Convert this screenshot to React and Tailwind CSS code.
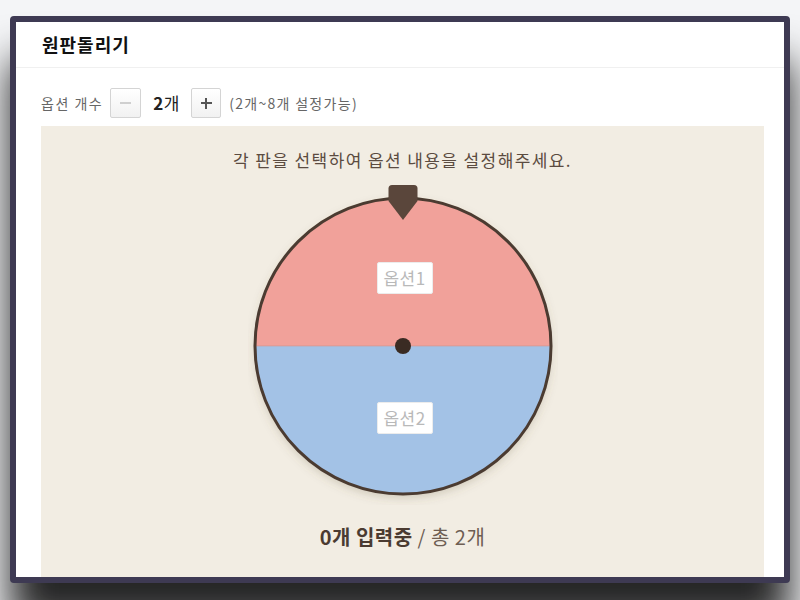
import React, { useState } from "react";

const font = { fontFamily: '"Noto Sans CJK KR", "Noto Sans", sans-serif' };

function Wheel({ labels }) {
  return (
    <div className="relative w-[310px] h-[320px]">
      <svg width="310" height="320" viewBox="0 0 310 320" className="absolute left-0 top-0">
        <defs>
          <filter id="sh" x="-20%" y="-20%" width="140%" height="140%">
            <feDropShadow dx="0" dy="4" stdDeviation="5" floodColor="#6b5a40" floodOpacity="0.25" />
          </filter>
          <clipPath id="disc">
            <circle cx="155" cy="161" r="148" />
          </clipPath>
        </defs>
        <circle cx="155" cy="161" r="148" fill="#a3c2e6" filter="url(#sh)" />
        <g clipPath="url(#disc)">
          <rect x="0" y="0" width="310" height="161" fill="#f1a19a" />
          <rect x="0" y="160" width="310" height="1.5" fill="#d99a94" opacity="0.6" />
        </g>
        <circle cx="155" cy="161" r="148" fill="none" stroke="#4b3b31" strokeWidth="3" />
        <circle cx="155" cy="161" r="8" fill="#3a2b23" />
        <path d="M144 0 H166 Q169.5 0 169.5 3.5 V16 L155 35 L140.5 16 V3.5 Q140.5 0 144 0 Z" fill="#5a463b" />
      </svg>
      {labels.map((l, i) => (
        <div
          key={l}
          className={`absolute left-[129px] w-[56px] h-[32px] bg-white rounded-[2px] border border-[#ececec] flex items-center justify-center text-[17px] tracking-[0.5px] text-[#b9b9b9] ${i === 0 ? "top-[77px]" : "top-[217px]"}`}
        >
          {l}
        </div>
      ))}
    </div>
  );
}

export default function App() {
  const [count, setCount] = useState(2);

  return (
    <div className="h-[600px] overflow-hidden bg-[#f4f5f7] pt-[16px] px-[10px]" style={font}>
      <div className="h-[567px] bg-white border-[6px] border-[#3e3a53] rounded-[4px] flex flex-col shadow-[0_44px_40px_0_rgba(0,0,0,0.85)]">
        <div className="h-[46px] shrink-0 border-b border-[#f0f0f0] flex items-center pl-[26px]">
          <h1 className="text-[18px] tracking-[1px] font-bold text-[#111]">원판돌리기</h1>
        </div>

        <div className="mt-[20px] h-[30px] flex items-center pl-[25px] shrink-0">
          <span className="text-[14px] tracking-[1.5px] text-[#666]">옵션 개수</span>
          <button
            type="button"
            onClick={() => setCount(Math.max(2, count - 1))}
            className="ml-[7px] w-[31px] h-[30px] border border-[#d4d4d4] rounded-[2px] bg-gradient-to-b from-white to-[#f1f1f1] flex items-center justify-center"
          >
            <span className="block w-[11px] h-[2px] bg-[#cfcfcf]" />
          </button>
          <span className="ml-[12px] w-[38px] text-[17px] tracking-[0.5px] text-[#222]">
            <b className="font-bold">{count}</b>개
          </span>
          <button
            type="button"
            onClick={() => setCount(Math.min(8, count + 1))}
            className="w-[30px] h-[30px] border border-[#d4d4d4] rounded-[2px] bg-gradient-to-b from-white to-[#f1f1f1] flex items-center justify-center relative"
          >
            <span className="block w-[11px] h-[2.5px] bg-[#555]" />
            <span className="absolute w-[2.5px] h-[11px] bg-[#555]" />
          </button>
          <span className="ml-[8px] text-[14px] tracking-[1.3px] text-[#666]">(2개~8개 설정가능)</span>
        </div>

        <div className="mt-[8px] ml-[25px] mr-[20px] flex-1 bg-[#f2ede3] flex flex-col items-center pt-[23px]">
          <p className="text-[17px] leading-[22px] tracking-[1.4px] text-[#5b4b40]">각 판을 선택하여 옵션 내용을 설정해주세요.</p>
          <div className="mt-[14px]">
            <Wheel labels={["옵션1", "옵션2"]} />
          </div>
          <p className="mt-[19px] text-[20px] leading-[26px] tracking-[0.5px] text-[#4b3b31]">
            <b className="font-bold">0개 입력중</b>
            <span className="text-[#6e5e53]"> / 총 {count}개</span>
          </p>
        </div>
      </div>
    </div>
  );
}
